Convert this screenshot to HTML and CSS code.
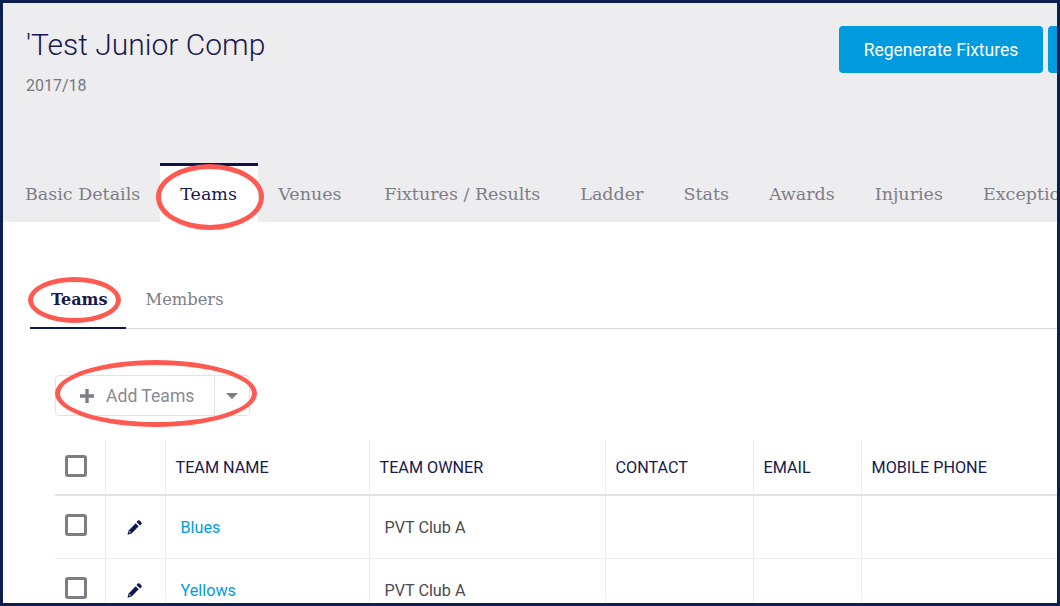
FILE: index.html
```html
<!DOCTYPE html>
<html lang="en">
  <head>
    <meta charset="UTF-8" />
    <meta name="viewport" content="width=device-width, initial-scale=1.0" />
    <title>Test Junior Comp</title>
    <link rel="stylesheet" href="styles.css">
  </head>
  <body>
    <div class="frame">
      <div class="header">
        <div class="top">
          <div class="title-block">
            <h1>'Test Junior Comp</h1>
            <p class="season">2017/18</p>
          </div>
          <div class="actions">
            <button class="btn">Regenerate Fixtures</button>
            <button class="btn"></button>
          </div>
        </div>
        <div class="tabs">
          <a class="tab">Basic Details</a>
          <a class="tab active">Teams</a>
          <a class="tab tab-venues">Venues</a>
          <a class="tab tab-fixtures">Fixtures / Results</a>
          <a class="tab">Ladder</a>
          <a class="tab">Stats</a>
          <a class="tab">Awards</a>
          <a class="tab">Injuries</a>
          <a class="tab">Exceptions</a>
        </div>
      </div>

      <div class="content">
        <div class="subtabs">
          <a class="subtab active">Teams</a>
          <a class="subtab">Members</a>
        </div>

        <div class="split-btn">
          <span class="split-main">
            <svg class="plus" viewBox="0 0 14 14" width="14" height="14"><path d="M5.300 0h3.400v5.300H14v3.400H8.700V14H5.300V8.700H0V5.300h5.300z" /></svg>
            Add Teams
          </span>
          <span class="split-caret"></span>
        </div>

        <table class="teams">
          <colgroup>
            <col class="c-check" />
            <col class="c-edit" />
            <col class="c-name" />
            <col class="c-owner" />
            <col class="c-contact" />
            <col class="c-email" />
            <col class="c-mobile" />
          </colgroup>
          <thead>
            <tr>
              <th><span class="check"></span></th>
              <th></th>
              <th>TEAM NAME</th>
              <th>TEAM OWNER</th>
              <th>CONTACT</th>
              <th>EMAIL</th>
              <th>MOBILE PHONE</th>
            </tr>
          </thead>
          <tbody>
            <tr>
              <td><span class="check"></span></td>
              <td class="edit"><svg viewBox="0 0 16 16" width="15" height="15"><path d="M11.600 0.600a1.300 1.300 0 0 1 1.800 0l2 2a1.300 1.300 0 0 1 0 1.800l-1.500 1.500-3.800-3.800zM9.300 3.500l3.200 3.200-7.600 7.600-4.400 1.300 1.200-4.500zM3 11.600l-.7 2.100 2.100-.7z" fill-rule="evenodd" /></svg></td>
              <td class="name"><a>Blues</a></td>
              <td class="owner">PVT Club A</td>
              <td></td>
              <td></td>
              <td></td>
            </tr>
            <tr>
              <td><span class="check"></span></td>
              <td class="edit"><svg viewBox="0 0 16 16" width="15" height="15"><path d="M11.600 0.600a1.300 1.300 0 0 1 1.800 0l2 2a1.300 1.300 0 0 1 0 1.800l-1.500 1.500-3.800-3.800zM9.300 3.500l3.200 3.200-7.600 7.600-4.400 1.300 1.200-4.500zM3 11.600l-.7 2.100 2.100-.7z" fill-rule="evenodd" /></svg></td>
              <td class="name"><a>Yellows</a></td>
              <td class="owner">PVT Club A</td>
              <td></td>
              <td></td>
              <td></td>
            </tr>
          </tbody>
        </table>
      </div>

      <!-- red annotation rings drawn over the screenshot -->
      <span class="ring ring-tab"></span>
      <span class="ring ring-subtab"></span>
      <span class="ring ring-add"></span>
    </div>
  </body>
</html>
```

FILE: styles.css
```css
html,
body {
  margin: 0;
  height: 100%;
  overflow: hidden;
}
body {
  font-family: Roboto, Arial, sans-serif;
  background: #fff;
}
.frame {
  position: relative;
  box-sizing: border-box;
  width: 1060px;
  height: 606px;
  border: 3px solid #0c1f4e;
  overflow: hidden;
  background: #fff;
}
.header {
  box-sizing: border-box;
  height: 219px;
  background: #ededf0;
  display: flex;
  flex-direction: column;
  justify-content: space-between;
}
.top {
  display: flex;
  padding: 23px 0 0 23px;
}
.title-block {
  flex: 0 0 813px;
}
h1 {
  margin: 0;
  padding-top: 1px;
  font-size: 30px;
  line-height: 36px;
  font-weight: 300;
  color: #17194f;
}
.season {
  margin: 13px 0 0;
  font-size: 16px;
  line-height: 20px;
  color: #77777f;
}
.actions {
  display: flex;
  gap: 5px;
  flex-shrink: 0;
}
.btn {
  box-sizing: border-box;
  width: 204px;
  height: 47px;
  padding: 0;
  border: 0;
  border-radius: 4px;
  background: #009bdf;
  color: #fff;
  font-family: Roboto, Arial, sans-serif;
  font-size: 17.500px;
}
.tabs {
  display: flex;
  padding-left: 2px;
  height: 59px;
}
.tab {
  box-sizing: border-box;
  padding: 16px 20px 0;
  border-top: 3px solid transparent;
  font-family: "DejaVu Serif", "Liberation Serif", serif;
  font-size: 17.500px;
  line-height: 24px;
  color: #7d7d85;
  white-space: nowrap;
}
.tab.active {
  min-width: 98px;
  background: #fff;
  border-top-color: #10104a;
  color: #17194f;
}
.tab-venues {
  min-width: 106px;
}
.tab-fixtures {
  min-width: 196px;
}
.subtabs {
  display: flex;
  margin: 46px 0 0 27px;
  height: 61px;
  box-sizing: border-box;
  border-bottom: 1px solid #d9d9d9;
}
.subtab {
  box-sizing: border-box;
  height: 61px;
  padding: 20px 20px 0;
  font-family: "DejaVu Serif", "Liberation Serif", serif;
  font-size: 16.300px;
  line-height: 24px;
  color: #7d7d85;
}
.subtab.active {
  padding: 20px 18px 0 21px;
  font-size: 16px;
  font-weight: 700;
  color: #17194f;
  border-bottom: 2px solid #10194f;
}
.split-btn {
  display: flex;
  box-sizing: border-box;
  width: 195px;
  height: 41px;
  margin: 46px 0 0 52px;
  border: 1px solid #e2e2e2;
  border-radius: 4px;
}
.split-main {
  flex: 1;
  display: flex;
  align-items: center;
  gap: 12px;
  padding-left: 24px;
  font-size: 17.600px;
  color: #8a8a92;
  border-right: 1px solid #e2e2e2;
}
.plus {
  fill: #7d7d85;
}
.split-caret {
  width: 34px;
  position: relative;
}
.split-caret::after {
  content: "";
  position: absolute;
  left: 11px;
  top: 17px;
  border-left: 6px solid transparent;
  border-right: 6px solid transparent;
  border-top: 6px solid #7d7d85;
}
.teams {
  table-layout: fixed;
  border-collapse: collapse;
  width: 1002px;
  margin: 24px 0 0 52px;
}
.c-check { width: 50px; }
.c-edit { width: 60px; }
.c-name { width: 204px; }
.c-owner { width: 236px; }
.c-contact { width: 148px; }
.c-email { width: 108px; }
th,
td {
  box-sizing: border-box;
  padding: 0 10px;
  border-left: 1px solid #ededed;
  text-align: left;
  font-weight: 400;
}
th:first-child,
td:first-child {
  border-left: 0;
}
th:first-child {
  padding-bottom: 2px;
}
td:first-child {
  padding-bottom: 4px;
}
th {
  height: 55px;
  font-size: 16.200px;
  color: #17194f;
  border-bottom: 2px solid #e2e2e2;
}
td {
  height: 63px;
  font-size: 16.200px;
  border-bottom: 1px solid #ededed;
}
.check {
  display: block;
  box-sizing: border-box;
  width: 22px;
  height: 22px;
  border: 3px solid #7d7d85;
  border-radius: 3px;
}
.edit {
  padding: 2px 12px 0 10px;
}
.edit svg {
  display: block;
  margin: 0 auto;
  fill: #10194f;
}
.name,
.owner {
  padding-top: 2px;
  padding-left: 15px;
}
.name a {
  color: #009bdf;
}
.owner {
  color: #4a4a50;
}
.ring {
  position: absolute;
  box-sizing: border-box;
  border: 5px solid #ff5a52;
  border-radius: 50%;
}
.ring-tab {
  left: 153px;
  top: 161px;
  width: 108px;
  height: 66px;
}
.ring-subtab {
  left: 25px;
  top: 274px;
  width: 93px;
  height: 46px;
}
.ring-add {
  left: 52px;
  top: 357px;
  width: 202px;
  height: 67px;
}
```
